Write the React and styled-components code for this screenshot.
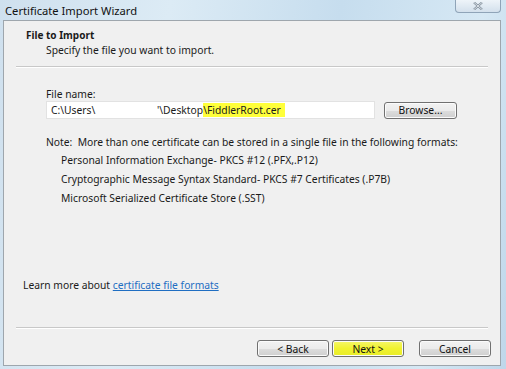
import React from 'react';
import styled, { createGlobalStyle } from 'styled-components';

const GlobalStyle = createGlobalStyle`
  html, body {
    margin: 0;
    padding: 0;
    width: 506px;
    height: 369px;
    overflow: hidden;
  }
  body {
    font-family: 'Noto Sans', 'Liberation Sans', sans-serif;
    font-size: 10.3px;
    color: #1a1a1a;
  }
`;

const Window = styled.div`
  width: 506px;
  height: 369px;
  display: flex;
  flex-direction: column;
  background: linear-gradient(100deg, #cfe0ee 0%, #dcebf5 30%, #c6ddee 60%, #d6e8f4 85%, #bfd7ea 100%);
`;

const TitleBar = styled.div`
  height: 20px;
  display: flex;
  align-items: flex-start;
  justify-content: space-between;
`;

const Title = styled.div`
  padding: 3px 0 0 5px;
  font-size: 11.2px;
  color: #111;
`;

const CloseButton = styled.div`
  width: 44px;
  height: 12px;
  margin-right: 5px;
  border: 1px solid #8fa4b8;
  border-top: none;
  border-radius: 0 0 4px 4px;
  background: linear-gradient(#eef4f9, #d3e0ec);
  display: flex;
  align-items: center;
  justify-content: center;
`;

const Panel = styled.div`
  flex: 1;
  margin: 0 5px 3px 3px;
  border: 1px solid #9ea6ad;
  background: #f0f0f0;
  display: flex;
  flex-direction: column;
`;

const Header = styled.div`
  height: 45px;
  padding: 7px 0 0 22px;
  box-sizing: border-box;
`;

const HeaderTitle = styled.div`
  font-weight: bold;
  font-size: 10px;
  line-height: 15px;
`;

const HeaderText = styled.div`
  padding-left: 20px;
  line-height: 14px;
`;

const Rule = styled.div`
  margin: 0 12px;
  border-top: 1px solid #c8c8c8;
  border-bottom: 1px solid #ffffff;
`;

const Body = styled.div`
  flex: 1;
  display: flex;
  flex-direction: column;
  padding: 19px 0 0 42px;
`;

const Label = styled.div`
  line-height: 14px;
`;

const FileRow = styled.div`
  display: flex;
  align-items: center;
  gap: 9px;
`;

const FileInput = styled.div`
  width: 329px;
  height: 18px;
  box-sizing: border-box;
  background: #ffffff;
  border: 1px solid #e2e2e2;
  display: flex;
  align-items: center;
  padding-left: 4px;
  white-space: pre;
`;

const Mark = styled.span`
  background: #ffff3a;
  padding-right: 4px;
`;

const Button = styled.div`
  width: ${p => p.$w || 72}px;
  height: 17px;
  box-sizing: border-box;
  border: 1px solid #707070;
  border-radius: 3px;
  background: ${p => p.$hl
    ? 'linear-gradient(#f4f66a, #f0f230 50%, #e8ec28)'
    : 'linear-gradient(#f2f2f2, #ebebeb 50%, #dddddd 51%, #cfcfcf)'};
  box-shadow: inset 0 0 0 1px #fbfbfb;
  display: flex;
  align-items: center;
  justify-content: center;
  color: #111;
`;

const Note = styled.div`
  margin-top: 16px;
  line-height: 14px;
  white-space: pre;
`;

const FormatList = styled.div`
  padding: 4px 0 0 15px;
  display: flex;
  flex-direction: column;
  gap: 5px;
  line-height: 14px;
`;

const LearnMore = styled.div`
  margin: auto 0 0 -23px;
  padding-bottom: 35px;
  line-height: 14px;
`;

const Link = styled.span`
  color: #1f6ec2;
  text-decoration: underline;
`;

const Footer = styled.div`
  height: 36px;
  display: flex;
  align-items: center;
  justify-content: flex-end;
  padding: 3px 9px 0 0;
  box-sizing: border-box;
  gap: 3px;
`;

const Spacer = styled.div`
  width: 9px;
`;

const CloseIcon = () => (
  <svg width="10" height="8" viewBox="0 0 10 8">
    <path d="M1 0.5 L9 7.5 M9 0.5 L1 7.5" stroke="#7c8a98" strokeWidth="2.2" />
    <path d="M1 0.5 L9 7.5 M9 0.5 L1 7.5" stroke="#f4f7fa" strokeWidth="0.8" />
  </svg>
);

export default function App() {
  return (
    <Window>
      <GlobalStyle />
      <TitleBar>
        <Title>Certificate Import Wizard</Title>
        <CloseButton><CloseIcon /></CloseButton>
      </TitleBar>
      <Panel>
        <Header>
          <HeaderTitle>File to Import</HeaderTitle>
          <HeaderText>Specify the file you want to import.</HeaderText>
        </Header>
        <Rule />
        <Body>
          <Label>File name:</Label>
          <FileRow>
            <FileInput>
              {'C:\\Users\\                       \'\\Desktop'}<Mark>{'\\FiddlerRoot.cer'}</Mark>
            </FileInput>
            <Button $w={73}>Browse...</Button>
          </FileRow>
          <Note>{'Note:  More than one certificate can be stored in a single file in the following formats:'}</Note>
          <FormatList>
            <div>Personal Information Exchange- PKCS #12 (.PFX,.P12)</div>
            <div>Cryptographic Message Syntax Standard- PKCS #7 Certificates (.P7B)</div>
            <div>Microsoft Serialized Certificate Store (.SST)</div>
          </FormatList>
          <LearnMore>
            Learn more about <Link>certificate file formats</Link>
          </LearnMore>
        </Body>
        <Rule />
        <Footer>
          <Button>&lt; Back</Button>
          <Button $hl>Next &gt;</Button>
          <Spacer />
          <Button>Cancel</Button>
        </Footer>
      </Panel>
    </Window>
  );
}
